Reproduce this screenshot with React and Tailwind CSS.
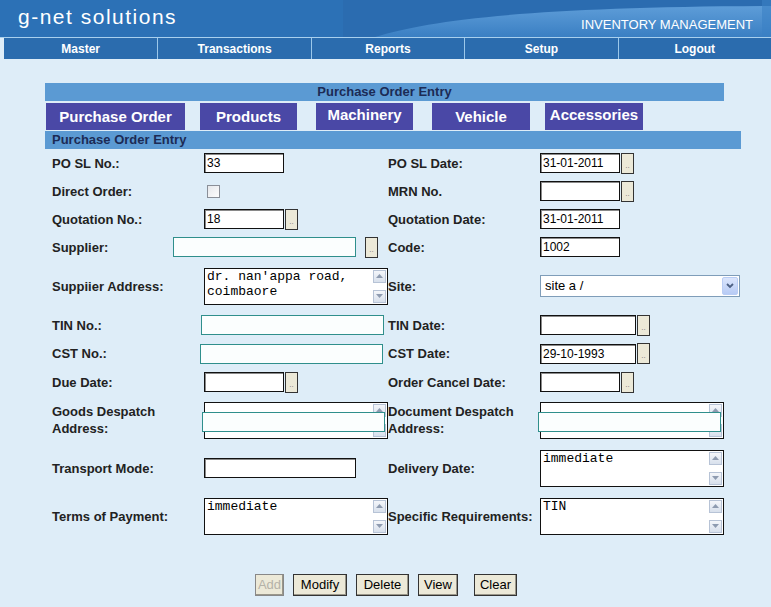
import React from 'react'

const SANS = { fontFamily: '"Liberation Sans", Arial, sans-serif' }

function Field({ w = 'w-[80px]', value = '', teal = false, cls = '' }) {
  return (
    <div
      className={
        'flex h-[20px] items-center px-[2px] text-[12px] text-black ' +
        w +
        ' ' +
        (teal
          ? 'border border-[#2f8f8c] bg-[#fbfefe]'
          : 'border border-[#111] bg-white shadow-[inset_1px_1px_0_#8a8a8a]') +
        ' ' +
        cls
      }
    >
      {value}
    </div>
  )
}

function Dots({ cls = '' }) {
  return (
    <div
      className={
        'flex h-[21px] w-[13px] items-end justify-center border border-[#333] bg-[#ece9d8] pb-[3px] text-[8px] leading-none text-[#777] ' +
        cls
      }
    >
      ..
    </div>
  )
}

function ScrollBtn({ down }) {
  return (
    <div className="flex h-[13px] w-[13px] items-center justify-center border border-[#b7c3d6] bg-gradient-to-b from-[#f4f6fa] to-[#d8e0ec]">
      <svg width="7" height="4" viewBox="0 0 7 4">
        <path d={down ? 'M0 0 L7 0 L3.5 4 Z' : 'M0 4 L7 4 L3.5 0 Z'} fill="#8e9bb0" />
      </svg>
    </div>
  )
}

function TextArea({ text = '', lines = [], overlay = false }) {
  return (
    <div className="relative h-[37px] w-[184px]">
      <div className="flex h-full w-full border border-[#111] bg-white">
        <div
          className="flex-1 overflow-hidden pl-[2px] text-[13px] leading-[15px] text-black"
          style={{ fontFamily: '"Liberation Mono", "Courier New", monospace' }}
        >
          {text}
          {lines.map((l) => (
            <div key={l}>{l}</div>
          ))}
        </div>
        <div className="flex w-[16px] flex-col items-center justify-between py-[1px]">
          <ScrollBtn />
          <ScrollBtn down />
        </div>
      </div>
      {overlay && (
        <div className="absolute left-[-2px] top-[10px] h-[20px] w-[183px] border border-[#2f8f8c] bg-[#fbfefe]" />
      )}
    </div>
  )
}

function Row({ h, labelW = 'w-[152px]', label, field, rlabel, rfield }) {
  return (
    <div className={'flex items-center ' + h}>
      <div className="flex w-[343px] items-center pl-[7px]">
        <div className={'shrink-0 text-[13px] font-bold leading-[17px] text-[#222] ' + labelW}>{label}</div>
        {field}
      </div>
      <div className="flex items-center">
        <div className="w-[152px] shrink-0 text-[13px] font-bold leading-[17px] text-[#222]">{rlabel}</div>
        {rfield}
      </div>
    </div>
  )
}

function Tab({ label, w, high }) {
  return (
    <div
      className={
        'flex h-[27px] items-center justify-center bg-[#4a48a6] text-[15px] font-bold text-white ' +
        w +
        (high ? ' pb-[3px]' : ' pt-[2px]')
      }
    >
      {label}
    </div>
  )
}

function Btn({ label, disabled, cls = '' }) {
  return (
    <div
      className={
        'flex h-[22px] items-center justify-center border border-[#333] bg-[#ece9d8] px-[6px] text-[13px] shadow-[inset_-1px_-1px_0_#9a978a] ' +
        (disabled ? 'text-[#b4b2a8] border-[#888] ' : 'text-black ') +
        cls
      }
    >
      {label}
    </div>
  )
}

export default function App() {
  const nav = ['Master', 'Transactions', 'Reports', 'Setup', 'Logout']
  return (
    <div className="min-h-[607px] w-[771px] overflow-hidden bg-[#deedf8]" style={SANS}>
      <header className="relative h-[37px] overflow-hidden bg-[#2c71b6]">
        <svg className="absolute inset-0" width="771" height="37" viewBox="0 0 771 37">
          <defs>
            <linearGradient id="wv" x1="0" y1="0" x2="0" y2="1">
              <stop offset="0" stopColor="#5e9dd8" />
              <stop offset="1" stopColor="#3a7fc3" />
            </linearGradient>
          </defs>
          <rect x="343" y="0" width="428" height="37" fill="#2b6cb0" />
          <path d="M375 37 C 430 20, 530 7, 771 6 L771 37 Z" fill="url(#wv)" />
          <rect x="762" y="0" width="9" height="37" fill="#3b80c4" opacity="0.6" />
        </svg>
        <div className="relative flex h-full items-center justify-between pl-[18px] pr-[18px]">
          <div className="pb-[4px] text-[21px] tracking-[1.5px] text-white">g-net solutions</div>
          <div className="pt-[13px] text-[13px] text-white">INVENTORY MANAGEMENT</div>
        </div>
      </header>
      <div className="h-[1px] bg-[#a9d0ee]" />
      <nav className="ml-[4px] grid h-[21px] grid-cols-5 bg-[#2b6cae]">
        {nav.map((n, i) => (
          <div
            key={n}
            className={
              'flex items-center justify-center text-[12px] font-bold text-white ' +
              (i > 0 ? 'border-l border-[#9cc8ea]' : '')
            }
          >
            {n}
          </div>
        ))}
      </nav>

      <main className="ml-[45px] mt-[24px]">
        <div className="flex h-[18px] w-[679px] items-center justify-center bg-[#5b9ad3] text-[13px] font-bold text-[#1c2b55]">
          Purchase Order Entry
        </div>
        <div className="mt-[2px] flex pl-[1px]">
          <Tab label="Purchase Order" w="w-[139px]" />
          <div className="w-[15px]" />
          <Tab label="Products" w="w-[97px]" />
          <div className="w-[19px]" />
          <Tab label="Machinery" w="w-[97px]" high />
          <div className="w-[19px]" />
          <Tab label="Vehicle" w="w-[98px]" />
          <div className="w-[15px]" />
          <Tab label="Accessories" w="w-[98px]" high />
        </div>
        <div className="mt-[1px] flex h-[18px] w-[696px] items-center bg-[#5b9ad3] pl-[7px] text-[13px] font-bold text-[#1c2b55]">
          Purchase Order Entry
        </div>

        <Row
          h="h-[28px]"
          label="PO SL No.:"
          field={<Field value="33" />}
          rlabel="PO SL Date:"
          rfield={
            <div className="flex items-center">
              <Field value="31-01-2011" />
              <Dots cls="ml-[1px]" />
            </div>
          }
        />
        <Row
          h="h-[28px]"
          label="Direct Order:"
          field={
            <div className="ml-[3px] h-[13px] w-[13px] border border-[#8a8f98] bg-gradient-to-br from-[#e6e8ec] to-[#fdfdfd]" />
          }
          rlabel="MRN No."
          rfield={
            <div className="flex items-center">
              <Field />
              <Dots cls="ml-[1px]" />
            </div>
          }
        />
        <Row
          h="h-[28px]"
          label="Quotation No.:"
          field={
            <div className="flex items-center">
              <Field value="18" />
              <Dots cls="ml-[1px]" />
            </div>
          }
          rlabel="Quotation Date:"
          rfield={<Field value="31-01-2011" />}
        />
        <Row
          h="h-[28px]"
          labelW="w-[121px]"
          label="Supplier:"
          field={
            <div className="flex items-center">
              <Field teal w="w-[183px]" />
              <Dots cls="ml-[9px]" />
            </div>
          }
          rlabel="Code:"
          rfield={<Field value="1002" />}
        />
        <Row
          h="h-[50px]"
          label="Suppiier Address:"
          field={<TextArea lines={["dr. nan'appa road,", 'coimbaore']} />}
          rlabel="Site:"
          rfield={
            <div className="flex h-[22px] w-[200px] items-center border border-[#7f9db9] bg-white pl-[4px] text-[13px]">
              <span className="flex-1">site a /</span>
              <div className="mr-[1px] flex h-[18px] w-[16px] items-center justify-center rounded-[2px] border border-[#b9cdf5] bg-gradient-to-b from-[#dbe6fd] to-[#b7cbf5]">
                <svg width="8" height="6" viewBox="0 0 8 6">
                  <path d="M1 1 L4 4 L7 1" stroke="#4d6185" strokeWidth="1.8" fill="none" />
                </svg>
              </div>
            </div>
          }
        />
        <Row
          h="h-[28px]"
          labelW="w-[149px]"
          label="TIN No.:"
          field={<Field teal w="w-[183px]" />}
          rlabel="TIN Date:"
          rfield={
            <div className="flex items-center">
              <Field w="w-[96px]" />
              <Dots cls="ml-[1px]" />
            </div>
          }
        />
        <Row
          h="h-[29px]"
          labelW="w-[148px]"
          label="CST No.:"
          field={<Field teal w="w-[183px]" />}
          rlabel="CST Date:"
          rfield={
            <div className="flex items-center">
              <Field w="w-[96px]" value="29-10-1993" />
              <Dots cls="ml-[1px]" />
            </div>
          }
        />
        <Row
          h="h-[28px]"
          label="Due Date:"
          field={
            <div className="flex items-center">
              <Field />
              <Dots cls="ml-[1px]" />
            </div>
          }
          rlabel="Order Cancel Date:"
          rfield={
            <div className="flex items-center">
              <Field />
              <Dots cls="ml-[1px]" />
            </div>
          }
        />
        <Row
          h="h-[48px]"
          label={
            <>
              Goods Despatch
              <br />
              Address:
            </>
          }
          field={<TextArea overlay />}
          rlabel={
            <>
              Document Despatch
              <br />
              Address:
            </>
          }
          rfield={<TextArea overlay />}
        />
        <Row
          h="h-[48px]"
          label="Transport Mode:"
          field={<Field w="w-[152px]" />}
          rlabel="Delivery Date:"
          rfield={<TextArea text="immediate" />}
        />
        <Row
          h="h-[48px]"
          label="Terms of Payment:"
          field={<TextArea text="immediate" />}
          rlabel="Specific Requirements:"
          rfield={<TextArea text="TIN" />}
        />
      </main>

      <div className="mt-[34px] flex justify-center pl-[1px]">
        <Btn label="Add" disabled cls="w-[29px] px-0" />
        <Btn label="Modify" cls="ml-[9px] w-[54px]" />
        <Btn label="Delete" cls="ml-[9px] w-[53px]" />
        <Btn label="View" cls="ml-[9px] w-[40px]" />
        <Btn label="Clear" cls="ml-[16px] w-[43px]" />
      </div>
    </div>
  )
}
